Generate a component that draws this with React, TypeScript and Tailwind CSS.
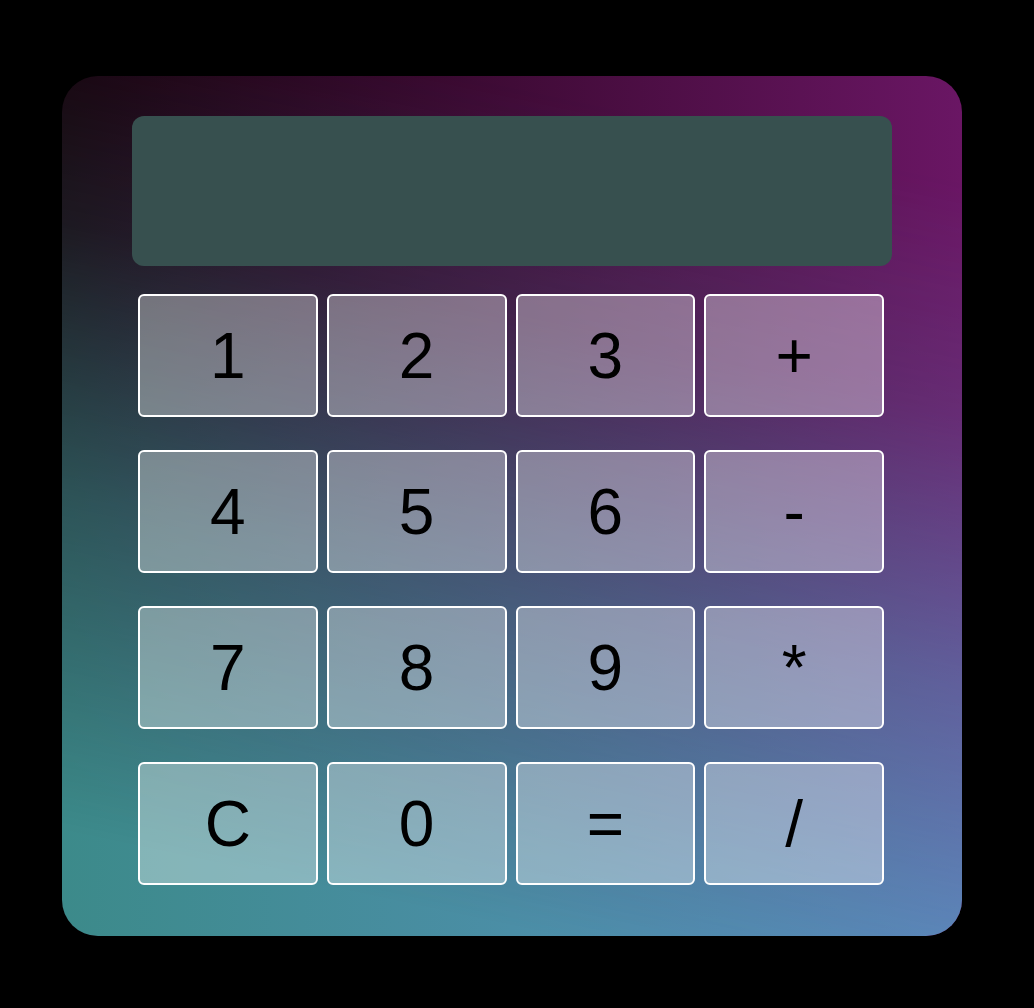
import React from 'react';

const keys = ['1', '2', '3', '+', '4', '5', '6', '-', '7', '8', '9', '*', 'C', '0', '=', '/'];

export default function App() {
  return (
    <div className="min-h-screen w-full bg-black pt-[76px] pl-[62px]" style={{ fontFamily: '"Liberation Sans", Arial, sans-serif' }}>
      <div className="relative w-[900px] h-[860px] rounded-[36px] overflow-hidden bg-[linear-gradient(to_right,#16000a,#6a1664)]">
        {/* teal/blue wash coming up from the bottom */}
        <div className="absolute inset-0 bg-[linear-gradient(to_right,#3c8a8a,#5a92c2)] [mask-image:linear-gradient(12deg,black_10%,rgba(0,0,0,0.6)_42%,rgba(0,0,0,0.18)_68%,transparent_90%)]" />

        <div className="relative flex flex-col pt-[40px] px-[70px]">
          <div className="h-[150px] w-[760px] rounded-xl bg-[#37504f]" />

          <div className="mt-[28px] ml-[6px] grid w-[746px] grid-cols-4 gap-x-[9px] gap-y-[33px]">
            {keys.map((k) => (
              <button
                key={k}
                className="h-[123px] rounded-md border-2 border-white bg-white/[0.36] text-[64px] leading-none text-black flex items-center justify-center"
              >
                {k}
              </button>
            ))}
          </div>
        </div>
      </div>
    </div>
  );
}
